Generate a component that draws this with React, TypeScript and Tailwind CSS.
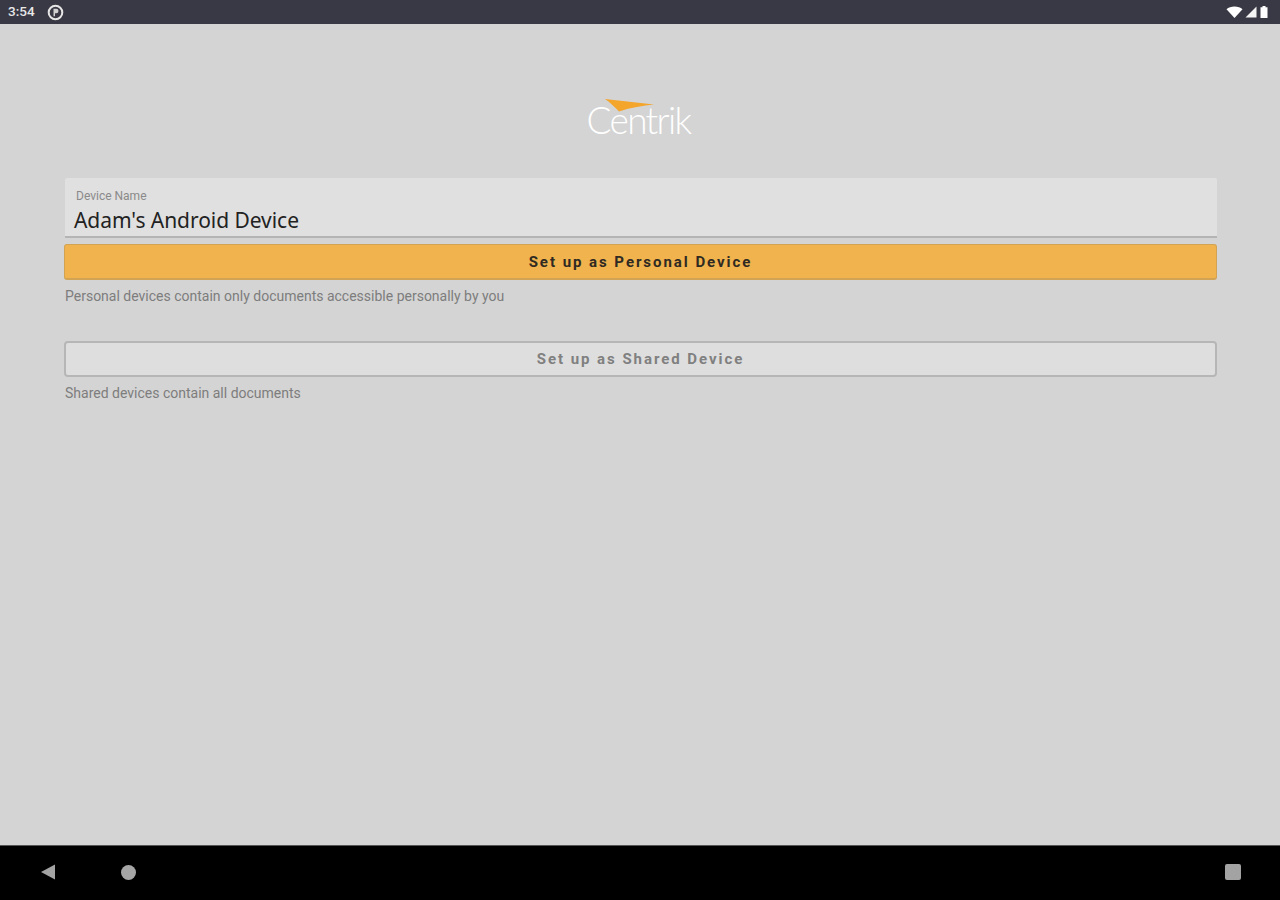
import React from "react";

const StatusBar: React.FC = () => {
  return (
    <div className="flex items-center justify-between h-6 bg-[#393945] pl-[8px] pr-[11px] shrink-0">
      <div className="flex items-center gap-[12px]">
        <span className="text-[13.5px] leading-none font-medium text-[#e8e8e8] font-['Roboto',sans-serif]">3:54</span>
        <svg width="17" height="17" viewBox="0 0 17 17">
          <circle cx="8.5" cy="8.5" r="6.8" fill="none" stroke="#e6e6e6" strokeWidth="2" />
          <path d="M6.5 4.8h2.8a2.2 2.2 0 0 1 0 4.4H8v3H6.5z" fill="#d0d0d0" />
        </svg>
      </div>
      <div className="flex items-center gap-[2px]">
        <svg width="17" height="14" viewBox="0 0 17 14">
          <path d="M0.5 4.2C2.5 2.4 5.2 1.4 8.5 1.4s6 1 8 2.8L8.5 13z" fill="#ffffff" />
        </svg>
        <svg width="12" height="14" viewBox="0 0 12 14">
          <path d="M0.5 12.5L11.5 1.5v11z" fill="#f4f4f4" />
        </svg>
        <svg width="10" height="14" viewBox="0 0 10 14">
          <path d="M3.5 1h3v1.2h2V13h-7V2.2h2z" fill="#ffffff" />
        </svg>
      </div>
    </div>
  );
};

const Logo: React.FC = () => {
  return (
    <div className="relative flex justify-center h-[40px] w-[110px] mr-[4px]">
      <span className="text-[37px] leading-[40px] font-light tracking-[-1.7px] text-white font-['Lato',sans-serif]">
        Centrik
      </span>
      <svg className="absolute left-[21px] top-[-2px]" width="50" height="18" viewBox="0 0 50 18">
        <path d="M0 1L49 6.5C38 7.5 26 9.5 14 13.5C10 9 5 4.5 0 1z" fill="#f4a52c" />
      </svg>
    </div>
  );
};

const NavBar: React.FC = () => {
  return (
    <div className="flex items-center justify-between h-[55px] bg-black border-t border-[#555555] pl-[40px] pr-[39px] pb-[2px] shrink-0">
      <div className="flex items-center gap-[65px]">
        <svg width="16" height="18" viewBox="0 0 16 18">
          <path d="M15 1.5V16.5L1 9z" fill="#a3a3a3" />
        </svg>
        <div className="w-[15px] h-[15px] rounded-full bg-[#a6a6a6]" />
      </div>
      <div className="w-[16px] h-[16px] rounded-[2px] bg-[#a3a3a3]" />
    </div>
  );
};

const App: React.FC = () => {
  return (
    <div className="flex flex-col w-[1280px] h-[900px] bg-[#d4d4d4] overflow-hidden font-['Roboto',sans-serif]">
      <StatusBar />
      <div className="flex flex-col flex-1 pl-[64px] pr-[63px]">
        <div className="flex justify-center pt-[76px] h-[154px]">
          <Logo />
        </div>
        <div className="h-[60px] ml-[1px] bg-[#e0e0e0] border-b-2 border-[#b4b4b4] rounded-t-[2px] pl-[10px] pt-[11px]">
          <div className="text-[12px] leading-[12px] pl-[1px] mt-[1px] text-[#8a8a8a]">Device Name</div>
          <div className="text-[21px] leading-[26px] mt-[5px] -ml-[1px] text-[#222222] font-['Noto_Sans',sans-serif] tracking-[-0.05px]">
            Adam's Android Device
          </div>
        </div>
        <button className="h-[36px] mt-[6px] pt-[2px] bg-[#f0b34e] border border-b-2 border-[#d3a354] rounded-[3px] text-[15px] font-bold tracking-[1.95px] text-[#2f2a22]">
          Set up as Personal Device
        </button>
        <p className="mt-[8px] ml-[1px] text-[14px] leading-[16px] text-[#7d7d7d]">
          Personal devices contain only documents accessible personally by you
        </p>
        <button className="h-[36px] mt-[37px] bg-[#dedede] border-2 border-[#b6b6b6] rounded-[4px] text-[15px] font-bold tracking-[1.95px] text-[#808080]">
          Set up as Shared Device
        </button>
        <p className="mt-[8px] ml-[1px] text-[14px] leading-[16px] text-[#7d7d7d]">
          Shared devices contain all documents
        </p>
      </div>
      <NavBar />
    </div>
  );
};

export default App;
